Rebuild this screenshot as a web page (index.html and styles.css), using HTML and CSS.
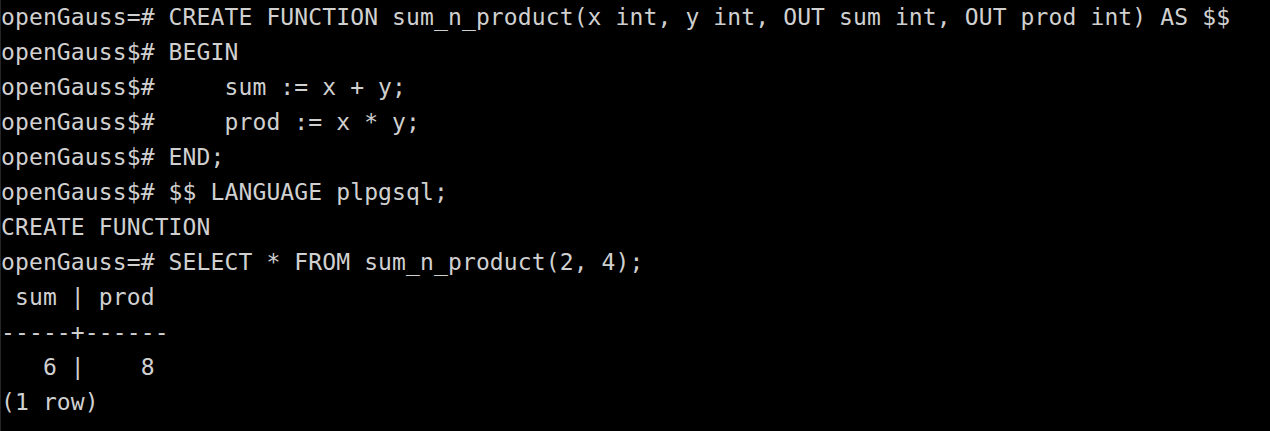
FILE: index.html
```html
<!DOCTYPE html>
<html>
<head>
<meta charset="utf-8">
<link rel="stylesheet" href="styles.css">
</head>
<body>
<div class="terminal">
<div class="line">openGauss=# CREATE FUNCTION sum_n_product(x int, y int, OUT sum int, OUT prod int) AS $$</div>
<div class="line">openGauss$# BEGIN</div>
<div class="line">openGauss$#     sum := x + y;</div>
<div class="line">openGauss$#     prod := x * y;</div>
<div class="line">openGauss$# END;</div>
<div class="line">openGauss$# $$ LANGUAGE plpgsql;</div>
<div class="line">CREATE FUNCTION</div>
<div class="line">openGauss=# SELECT * FROM sum_n_product(2, 4);</div>
<div class="line"> sum | prod</div>
<div class="line">-----+------</div>
<div class="line">   6 |    8</div>
<div class="line">(1 row)</div>
</div>
</body>
</html>
```
FILE: styles.css
```css
html, body {
  margin: 0;
  padding: 0;
  background: #000;
}
.terminal {
  width: 1270px;
  height: 431px;
  box-sizing: border-box;
  border-left: 1px solid #262626;
  background: #000;
  color: #d0d0d0;
  font-family: "DejaVu Sans Mono", monospace;
  font-size: 23px;
  letter-spacing: 0.12px;
  line-height: 35px;
  overflow: hidden;
}
.line {
  white-space: pre;
  height: 35px;
}
```
